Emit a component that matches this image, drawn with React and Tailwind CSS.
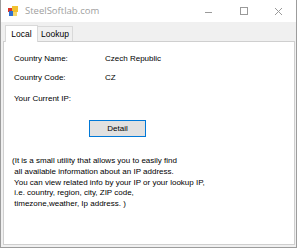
import React from "react"

const AppIcon = () => (
  <svg width="10" height="11" viewBox="0 0 10 11">
    <rect x="0" y="2" width="5" height="4" fill="#d9372b" />
    <rect x="4" y="0" width="6" height="6" fill="#f2c230" />
    <rect x="1" y="5" width="4" height="5" fill="#2f6fd0" />
    <rect x="5" y="6" width="4" height="4" fill="#f4d76a" />
  </svg>
)

const CaptionButtons = () => (
  <div className="flex h-full">
    <div className="w-[35px] h-full flex items-center justify-center">
      <svg width="7" height="7" viewBox="0 0 7 7">
        <line x1="0" y1="4.5" x2="7" y2="4.5" stroke="#9a9a9a" strokeWidth="1" />
      </svg>
    </div>
    <div className="w-[35px] h-full flex items-center justify-center">
      <svg width="8" height="8" viewBox="0 0 8 8">
        <rect x="0.5" y="0.5" width="7" height="7" fill="none" stroke="#9a9a9a" strokeWidth="1" />
      </svg>
    </div>
    <div className="w-[35px] h-full flex items-center justify-center">
      <svg width="7" height="7" viewBox="0 0 7 7">
        <path d="M0 0 L7 7 M7 0 L0 7" stroke="#9a9a9a" strokeWidth="1" />
      </svg>
    </div>
  </div>
)

const about = [
  "(It is a small utility that allows you to easily find",
  " all available information about an IP address.",
  " You can view related info by your IP or your lookup IP,",
  " i.e. country, region, city, ZIP code,",
  " timezone,weather, Ip address. )",
]

export default function App() {
  return (
    <div className="w-[300px] h-[248px] bg-white overflow-hidden font-['Liberation_Sans',Arial,sans-serif]">
      <div className="w-[297px] h-[248px] border-l border-r border-b border-[#9c9c9c] flex flex-col">
        <div className="h-[22px] bg-white flex items-center justify-between">
          <div className="flex items-center pl-[7px] gap-[7px]">
            <AppIcon />
            <span className="text-[9.5px] text-[#a0a0a0] font-['Open_Sans',sans-serif]">SteelSoftlab.com</span>
          </div>
          <CaptionButtons />
        </div>

        <div className="flex-1 bg-[#f0f0f0] px-[2px] pt-[2px] pb-[2px] flex flex-col">
          <div className="flex items-end h-[17px] pl-[2px]">
            <div className="relative z-10 w-[33px] h-[17px] bg-white border border-b-0 border-[#d9d9d9] flex items-center justify-center text-[8.5px] text-black -mb-px">
              Local
            </div>
            <div className="w-[35px] h-[15px] bg-[#f0f0f0] border border-l-0 border-b-0 border-[#d9d9d9] flex items-center justify-center text-[8.5px] text-black">
              Lookup
            </div>
          </div>

          <div className="flex-1 bg-white border border-[#cfcfcf] pl-[10px] pt-[12px] w-[292px] text-[8px] leading-[10px] text-black">
            <div className="flex">
              <span className="w-[91px]">Country Name:</span>
              <span>Czech Republic</span>
            </div>
            <div className="flex mt-[9px]">
              <span className="w-[91px]">Country Code:</span>
              <span>CZ</span>
            </div>
            <div className="flex mt-[11px]">
              <span className="w-[91px]">Your Current IP:</span>
            </div>

            <div className="mt-[16px] pl-[75px]">
              <button className="w-[57px] h-[17px] bg-[#e1e1e1] border border-solid border-[#0078d7] text-[8px] text-black flex items-center justify-center">
                Detail
              </button>
            </div>

            <div className="mt-[19px] -ml-[2px] leading-[10.75px] whitespace-pre">
              {about.map((line) => (
                <div key={line}>{line}</div>
              ))}
            </div>
          </div>
        </div>
      </div>
    </div>
  )
}
